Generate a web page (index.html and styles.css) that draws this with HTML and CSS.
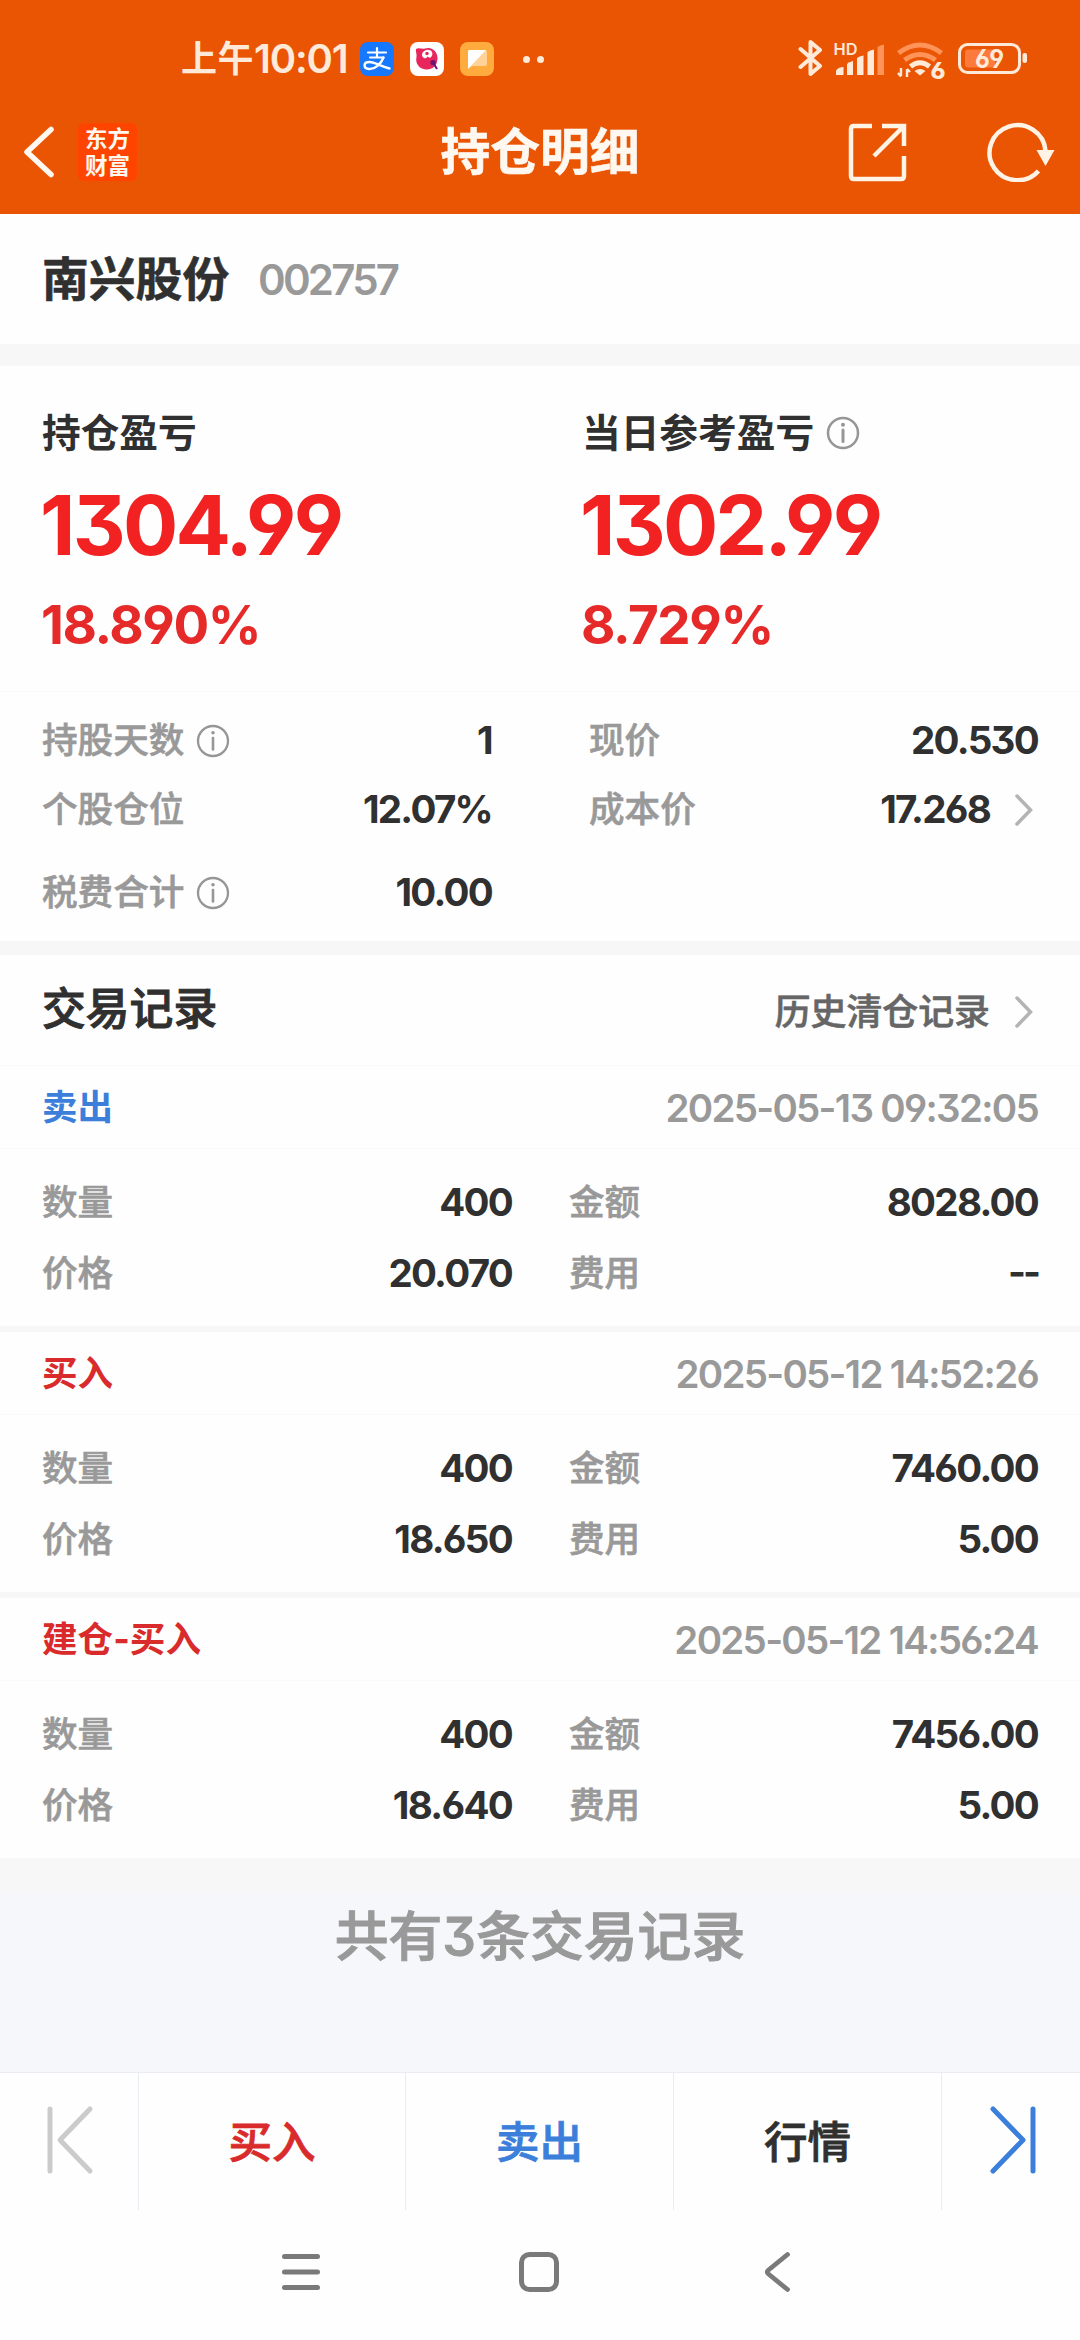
FILE: index.html
```html
<!DOCTYPE html>
<html lang="zh-CN">
<head>
<meta charset="utf-8">
<title>持仓明细</title>
<link rel="stylesheet" href="styles.css">
</head>
<body>
<div class="screen">
  <header class="top">
    <div class="status">
      <span class="clock">上午<span class="clock-num">10:01</span></span>
      <svg class="app-icon" viewBox="0 0 34 34"><rect width="34" height="34" rx="8" fill="#1677ff"/><g fill="none" stroke="#fff" stroke-linecap="round"><path d="M8 10.5H26M17 6V15M10 15.5H23.5" stroke-width="2.2"/><path d="M23.500 15.500C21 22 15 27.500 9 27C3 26.500 3 20 9.500 20C15 20 21 24.500 29.500 26.500" stroke-width="2.400"/></g></svg>
      <svg class="app-icon" viewBox="0 0 34 34"><rect width="34" height="34" rx="8" fill="#fff"/><path d="M6 7C9 5 12 7.500 15 6.500C22 4 28 10 27.500 17C27 24 22 28 16 27.500C9 27 5 21 6.500 15C7 12 5.500 10 6 7Z" fill="#e8265c"/><path d="M12 12C13 7.500 20 6 22 10C23.500 14 20 17.500 17.500 14.500C16 18 11.500 16 12 12Z" fill="#fff"/><circle cx="17" cy="11.500" r="1.700" fill="#e8265c"/><circle cx="23" cy="20.500" r="2.600" fill="#6b1470"/><path d="M24 22L27 27" stroke="#6b1470" stroke-width="2"/></svg>
      <svg class="app-icon" viewBox="0 0 34 34"><rect width="34" height="34" rx="8" fill="#ffab3d"/><path d="M8 9.500Q8 8 9.500 8H25Q27 8 27 10V22Q27 24 25 24H12L8 27Z" fill="#ffd397"/><path d="M8 9.500Q8 8 9.500 8H26L8 27Z" fill="#fff"/></svg>
      <span class="dots"><i></i><i></i></span>
      <svg class="sys" viewBox="0 -3 232 50" width="232" height="50">
        <path d="M2.500 12L22 29L12.500 37V5L22 13L2.500 30" fill="none" stroke="#ffe9d9" stroke-width="4" stroke-linejoin="round" stroke-linecap="round"/>
        <text class="hd" x="35.500" y="17.500" textLength="24" lengthAdjust="spacingAndGlyphs">HD</text>
        <g fill="#ffe9d9"><path d="M38 38V34Q40 30 45.500 30V38Z"/><path d="M49 38V27Q51 25 55 24V38Z"/><path d="M59 38V21Q61 19 65.500 18.500V38Z"/><path d="M69.500 38V15Q72 13 76 12.500V38Z"/></g>
        <path d="M79.500 38V10Q82 8 86 7.500V38Z" fill="#ff9358"/>
        <g fill="none" stroke-width="5"><path d="M100.500 16Q122 0 143.500 16" stroke="#ff9358"/><path d="M106.500 23Q122 12 137.500 23" stroke="#ff9358"/><path d="M112.500 29.500Q122 22 131.500 29.500" stroke="#ffe9d9"/></g>
        <path d="M116.500 34Q122 30 127.500 34L122 38.500Z" fill="#ffe9d9"/>
        <path d="M103 31V39M109 40V32M100 36L103 39.500M109 32L112 35" stroke="#ffe9d9" stroke-width="2.400" fill="none"/>
        <text class="six" x="132.500" y="41.500" textLength="15" lengthAdjust="spacingAndGlyphs">6</text>
        <rect x="161.500" y="7.500" width="60" height="28" rx="8" fill="none" stroke="#ffe9d9" stroke-width="3"/>
        <path d="M170 12.500H197V30.500H170Q167 30.500 167 27.500V15.500Q167 12.500 170 12.500Z" fill="#fb7a3c"/>
        <rect x="224.500" y="16" width="4.500" height="10" rx="2" fill="#ffe9d9"/>
        <text class="batt" x="177" y="30.500" textLength="29" lengthAdjust="spacingAndGlyphs">69</text>
      </svg>
    </div>
    <nav class="titlebar">
      <div class="title-left">
        <svg width="34" height="52" viewBox="0 0 34 52"><path d="M29 3.500L5 26L29 48.500" fill="none" stroke="#fff8f0" stroke-width="5.500" stroke-linecap="round" stroke-linejoin="round"/></svg>
        <div class="logo"><span>东方</span><span>财富</span></div>
      </div>
      <h1>持仓明细</h1>
      <div class="title-right">
        <svg width="60" height="60" viewBox="0 0 60 60"><path d="M25 4H7Q4 4 4 7V54Q4 57 7 57H54Q57 57 57 54V34M35 4H57V24M27 34L57 4" fill="none" stroke="#fff3e6" stroke-width="4.500"/></svg>
        <svg width="70" height="60" viewBox="0 0 70 60"><path d="M58.500 29A28 27.500 0 1 0 51.500 49" fill="none" stroke="#fff3e6" stroke-width="4.500"/><path d="M49.500 28H67.500L58.500 44Z" fill="#fff3e6"/></svg>
      </div>
    </nav>
  </header>

  <section class="stock"><h2>南兴股份</h2><span class="code">002757</span></section>

  <section class="profit">
    <div class="pcol">
      <div class="plabel">持仓盈亏</div>
      <div class="big">1304.99</div>
      <div class="pct">18.890%</div>
    </div>
    <div class="pcol">
      <div class="plabel">当日参考盈亏<svg class="info" viewBox="0 0 34 34"><circle cx="17" cy="17" r="15" fill="none" stroke="#969696" stroke-width="2.500"/><circle cx="17" cy="8.800" r="2" fill="#969696"/><path d="M17 14V25.500" stroke="#969696" stroke-width="3" stroke-linecap="round"/></svg></div>
      <div class="big">1302.99</div>
      <div class="pct">8.729%</div>
    </div>
  </section>

  <section class="facts">
    <div class="fact"><span class="lab">持股天数<svg class="info" viewBox="0 0 34 34"><circle cx="17" cy="17" r="15" fill="none" stroke="#969696" stroke-width="2.300"/><circle cx="17" cy="8.800" r="1.800" fill="#969696"/><path d="M17 14V25.500" stroke="#969696" stroke-width="2.600" stroke-linecap="round"/></svg></span><span class="val">1</span></div>
    <div class="fact right"><span class="lab">现价</span><span class="val">20.530</span></div>
    <div class="fact"><span class="lab">个股仓位</span><span class="val">12.07%</span></div>
    <div class="fact right"><span class="lab">成本价</span><span class="val">17.268</span><svg class="chev" viewBox="0 0 18 32"><path d="M2 2L15.500 16L2 30" fill="none" stroke="#b4b4b4" stroke-width="3.500" stroke-linecap="round"/></svg></div>
    <div class="fact"><span class="lab">税费合计<svg class="info" viewBox="0 0 34 34"><circle cx="17" cy="17" r="15" fill="none" stroke="#969696" stroke-width="2.300"/><circle cx="17" cy="8.800" r="1.800" fill="#969696"/><path d="M17 14V25.500" stroke="#969696" stroke-width="2.600" stroke-linecap="round"/></svg></span><span class="val">10.00</span></div>
  </section>

  <section class="rec-head"><h3>交易记录</h3><span class="history">历史清仓记录<svg class="chev" viewBox="0 0 18 32"><path d="M2 2L15.500 16L2 30" fill="none" stroke="#b4b4b4" stroke-width="3.500" stroke-linecap="round"/></svg></span></section>

  <article class="record first">
    <div class="rhead"><b class="sell">卖出</b><time>2025-05-13 09:32:05</time></div>
    <div class="rgrid">
      <span class="lab">数量</span><span class="val">400</span><span class="lab">金额</span><span class="val">8028.00</span>
      <span class="lab">价格</span><span class="val">20.070</span><span class="lab">费用</span><span class="val dash">--</span>
    </div>
  </article>
  <article class="record">
    <div class="rhead"><b class="buy">买入</b><time>2025-05-12 14:52:26</time></div>
    <div class="rgrid">
      <span class="lab">数量</span><span class="val">400</span><span class="lab">金额</span><span class="val">7460.00</span>
      <span class="lab">价格</span><span class="val">18.650</span><span class="lab">费用</span><span class="val">5.00</span>
    </div>
  </article>
  <article class="record">
    <div class="rhead"><b class="buy">建仓-买入</b><time>2025-05-12 14:56:24</time></div>
    <div class="rgrid">
      <span class="lab">数量</span><span class="val">400</span><span class="lab">金额</span><span class="val">7456.00</span>
      <span class="lab">价格</span><span class="val">18.640</span><span class="lab">费用</span><span class="val">5.00</span>
    </div>
  </article>

  <div class="summary">共有3条交易记录</div>

  <footer class="actions">
    <span class="act"><svg width="50" height="70" viewBox="0 0 50 70"><path d="M6 4V66M46 4L16 35L46 66" fill="none" stroke="#cbcbcb" stroke-width="5" stroke-linecap="round" stroke-linejoin="round"/></svg></span>
    <span class="act buy">买入</span>
    <span class="act sell">卖出</span>
    <span class="act">行情</span>
    <span class="act"><svg width="50" height="70" viewBox="0 0 50 70"><path d="M46 4V66M6 4L36 35L6 66" fill="none" stroke="#3b7fdb" stroke-width="5" stroke-linecap="round" stroke-linejoin="round"/></svg></span>
  </footer>
  <div class="sysnav">
    <svg width="40" height="44" viewBox="0 0 40 44"><path d="M3.500 6.500H36.500M3.500 22H36.500M3.500 37.500H36.500" stroke="#7a7a7a" stroke-width="5" stroke-linecap="round"/></svg>
    <svg width="44" height="44" viewBox="0 0 44 44"><rect x="4.500" y="4.500" width="35" height="35" rx="8" fill="none" stroke="#7a7a7a" stroke-width="5"/></svg>
    <svg width="30" height="44" viewBox="0 0 30 44"><path d="M25.500 4.500L6.500 20Q4 22 6.500 24L25.500 39.500" fill="none" stroke="#7a7a7a" stroke-width="4.800" stroke-linecap="round"/></svg>
  </div>
</div>
</body>
</html>
```
FILE: styles.css
```css
* { box-sizing: border-box; margin: 0; padding: 0; }
body {
  width: 1080px;
  height: 2340px;
  overflow: hidden;
  background: #fefefe;
  color: #303030;
  font-family: Inter, "Noto Sans CJK SC", sans-serif;
  font-feature-settings: "cv03" 1, "cv04" 1, "cv09" 1;
}
svg { display: block; flex: none; }
.screen { display: flex; flex-direction: column; height: 2340px; }

.top { height: 214px; background: #ea5504; color: #fff8f0; }
.status { height: 98px; padding: 20px 50px 0 181px; display: flex; align-items: center; }
.clock { display: flex; align-items: center; width: 179px; font-size: 36px; font-weight: 700; color: #ffe9d9; line-height: 50px; letter-spacing: 0.5px; }
.clock-num { font-size: 40px; font-weight: 600; letter-spacing: -1.2px; }
.app-icon { width: 34px; height: 34px; margin-right: 16px; }
.dots { display: flex; gap: 7px; margin-left: 13px; }
.dots i { width: 7px; height: 7px; border-radius: 50%; background: #ffe9d9; }
.sys { margin-left: auto; }
.sys text { font-family: Inter, sans-serif; fill: #ffe9d9; }
.hd { font-size: 16px; font-weight: 600; }
.six { font-size: 23px; font-weight: 800; }
.batt { font-size: 26px; font-weight: 700; }

.titlebar { height: 108px; display: grid; grid-template-columns: 1fr auto 1fr; align-items: center; }
.title-left { display: flex; align-items: center; gap: 22px; padding-left: 22px; }
.logo { width: 59px; height: 58px; border-radius: 6px; background: #ff4400; display: flex; flex-direction: column; justify-content: center; font-size: 22.5px; font-weight: 700; line-height: 27px; text-align: center; }
h1 { font-size: 49.8px; line-height: 60px; font-weight: 700; -webkit-text-stroke: 0.6px; }
.title-right { display: flex; justify-content: flex-end; gap: 80px; padding-right: 23px; }

.stock { height: 130px; padding: 0 42px; display: flex; align-items: center; }
h2 { font-size: 46.8px; line-height: 60px; font-weight: 700; width: 216px; -webkit-text-stroke: 0.6px; }
.code { font-size: 42px; font-weight: 600; color: #999; letter-spacing: -2.8px; }

.profit { height: 348px; border-top: 22px solid #f7f7f7; border-bottom: 1px solid #fafafa; padding: 0 0 0 42px; display: flex; }
.pcol { flex: none; width: 540px; padding-top: 40px; }
.plabel { display: flex; align-items: center; font-size: 38.7px; line-height: 54px; font-weight: 700; }
.info { width: 34px; height: 34px; margin-left: 12px; }
.big { font-size: 82px; line-height: 82px; margin-top: 25px; margin-left: -2px; font-weight: 700; color: #f22222; letter-spacing: -2.7px; }
.pct { font-size: 53px; line-height: 60px; margin-top: 28px; margin-left: -1px; font-weight: 700; color: #e62a2a; letter-spacing: -1.4px; }

.facts { height: 249px; padding: 12px 42px 0; display: grid; grid-template-columns: 450px 1fr; grid-template-rows: 74px 64px 101px; }
.fact { display: flex; align-items: center; justify-content: space-between; }
.fact.right { padding-left: 97px; }
.fact.right .lab { flex: 1; }
.lab { display: flex; align-items: center; font-size: 35.6px; font-weight: 500; color: #999; line-height: 50px; -webkit-text-stroke: 0.6px; }
.val { font-size: 38.5px; font-weight: 700; line-height: 50px; letter-spacing: -1.7px; }
.fact .val { margin-bottom: 2px; }
.dash { letter-spacing: -3px; margin-bottom: 2px; }
.chev { width: 18px; height: 32px; margin: 0 5px 0 25px; }

.rec-head { height: 125px; border-top: 14px solid #f7f7f7; border-bottom: 1px solid #fafafa; padding: 0 42px; display: flex; align-items: center; justify-content: space-between; }
h3 { font-size: 43.8px; line-height: 60px; font-weight: 500; -webkit-text-stroke: 1px; }
.history { display: flex; align-items: center; font-size: 35.9px; line-height: 50px; font-weight: 500; color: #666; padding-top: 4px; -webkit-text-stroke: 0.6px; }

.record { height: 266px; border-top: 6px solid #f7f7f7; }
.record.first { height: 260px; border-top: 0; }
.rhead { height: 83px; border-bottom: 1px solid #fafafa; padding: 1px 42px 0; display: flex; align-items: center; justify-content: space-between; font-size: 35.6px; line-height: 50px; }
.sell { color: #3b7fdb; }
.buy { color: #d92b2b; }
time { font-size: 38.5px; font-weight: 600; color: #999; letter-spacing: -1.7px; }
.rgrid { padding: 17px 42px 0; display: grid; grid-template-columns: 100px 370px 157px 369px; grid-template-rows: 71px 71px; align-items: center; }
.rgrid .lab { padding-top: 3px; }
.rgrid .lab:nth-child(4n+3) { padding-left: 57px; }
.rgrid .val { text-align: right; }

.summary { height: 214px; background: linear-gradient(#f7f7f7 36px, #f6f7fa 36px); text-align: center; font-size: 53.8px; line-height: 76px; padding-top: 41px; font-weight: 500; color: #999; -webkit-text-stroke: 1px; }

.actions { height: 138px; border-top: 1px solid #e9edf2; display: grid; grid-template-columns: 139px 267px 268px 268px 1fr; }
.act { display: flex; align-items: center; justify-content: center; border-right: 1px solid #e9edf2; font-size: 43.5px; font-weight: 500; padding-bottom: 4px; -webkit-text-stroke: 0.8px; }
.act:last-child { border: 0; padding-left: 2px; }
.sysnav { height: 124px; display: flex; align-items: center; padding-left: 281px; }
.sysnav svg:nth-child(2) { margin-left: 196px; }
.sysnav svg:nth-child(3) { margin-left: 201px; }
```
